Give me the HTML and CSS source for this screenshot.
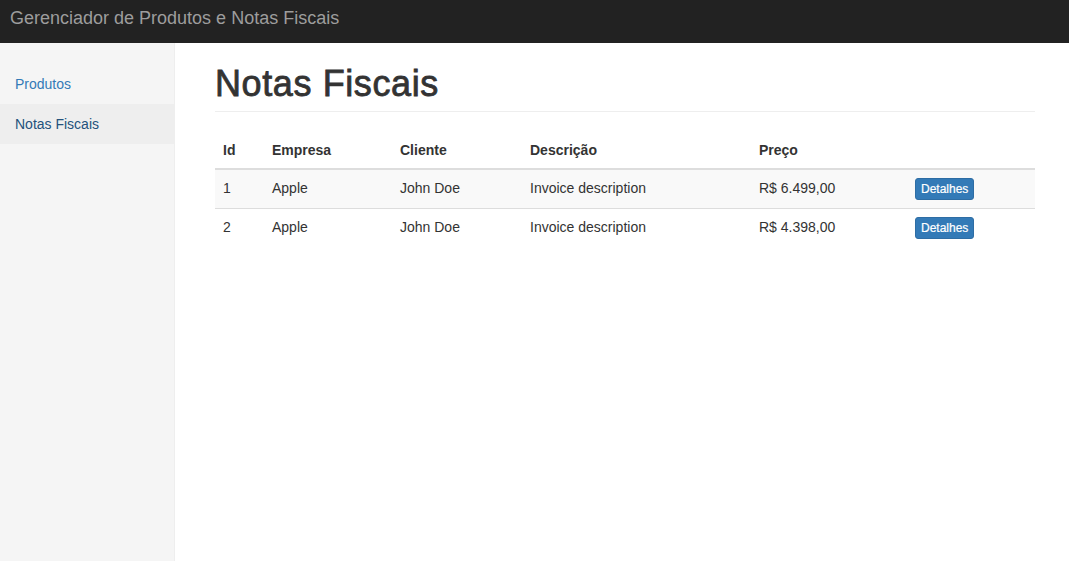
FILE: index.html
```html
<!DOCTYPE html>
<html lang="pt-BR">
<head>
<meta charset="utf-8">
<title>Gerenciador de Produtos e Notas Fiscais</title>
<link rel="stylesheet" href="styles.css">
</head>
<body>
<nav class="navbar">
  <a class="brand" href="#">Gerenciador de Produtos e Notas Fiscais</a>
</nav>
<div class="layout">
  <aside class="sidebar">
    <ul class="nav-sidebar">
      <li><a href="#">Produtos</a></li>
      <li class="active"><a href="#">Notas Fiscais</a></li>
    </ul>
  </aside>
  <main class="main">
    <div class="page-header"><h1>Notas Fiscais</h1></div>
    <table class="table">
      <colgroup>
        <col class="c-id"><col class="c-emp"><col class="c-cli"><col class="c-desc"><col class="c-preco"><col class="c-acao">
      </colgroup>
      <thead>
        <tr><th>Id</th><th>Empresa</th><th>Cliente</th><th>Descrição</th><th>Preço</th><th></th></tr>
      </thead>
      <tbody>
        <tr><td>1</td><td>Apple</td><td>John Doe</td><td>Invoice description</td><td>R$ 6.499,00</td><td><a class="btn" href="#">Detalhes</a></td></tr>
        <tr><td>2</td><td>Apple</td><td>John Doe</td><td>Invoice description</td><td>R$ 4.398,00</td><td><a class="btn" href="#">Detalhes</a></td></tr>
      </tbody>
    </table>
  </main>
</div>
</body>
</html>
```

FILE: styles.css
```css
* { box-sizing: border-box; }
html, body { margin: 0; padding: 0; }
body {
  font-family: "Liberation Sans", Arial, Helvetica, sans-serif;
  font-size: 14px;
  line-height: 20px;
  color: #333;
  background: #fff;
}
a { text-decoration: none; }

.navbar {
  height: 43px;
  background: #222;
  display: flex;
  align-items: flex-start;
}
.brand {
  font-size: 18px;
  line-height: 36px;
  padding: 0 10px;
  color: #9d9d9d;
}

.layout {
  display: flex;
  min-height: calc(100vh - 43px);
}
.sidebar {
  width: 175px;
  flex: 0 0 175px;
  background: #f5f5f5;
  border-right: 1px solid #eee;
  padding-top: 21px;
}
.nav-sidebar {
  list-style: none;
  margin: 0;
  padding: 0;
}
.nav-sidebar a {
  display: block;
  padding: 10px 15px;
  color: #337ab7;
}
.nav-sidebar .active a {
  background: #eee;
  color: #23527c;
}

.main {
  flex: 1;
  padding: 0 34px 0 40px;
}
.page-header {
  margin: 21px 0 20px;
  padding-bottom: 7px;
  border-bottom: 1px solid #eee;
}
.page-header h1 {
  margin: 0;
  font-size: 36px;
  line-height: 39.6px;
  font-weight: 500;
  color: #333;
  letter-spacing: 0.6px;
  -webkit-text-stroke: 0.8px #333;
}

.table {
  width: 820px;
  border-collapse: collapse;
  table-layout: fixed;
}
.c-id { width: 49px; }
.c-emp { width: 128px; }
.c-cli { width: 130px; }
.c-desc { width: 229px; }
.c-preco { width: 156px; }
.c-acao { width: 128px; }
.table th, .table td {
  padding: 8px;
  text-align: left;
  vertical-align: top;
  line-height: 20px;
}
.table th {
  font-weight: bold;
  border-bottom: 2px solid #ddd;
}
.table tbody td { border-top: 1px solid #ddd; }
.table tbody tr:first-child td { border-top: 0; }
.table tbody tr:nth-child(odd) { background: #f9f9f9; }

.btn {
  display: inline-block;
  font-size: 12px;
  line-height: 18px;
  padding: 1px 5px;
  color: #fff;
  background: #337ab7;
  border: 1px solid #2e6da4;
  border-radius: 3px;
  -webkit-text-stroke: 0.2px #fff;
}
```
